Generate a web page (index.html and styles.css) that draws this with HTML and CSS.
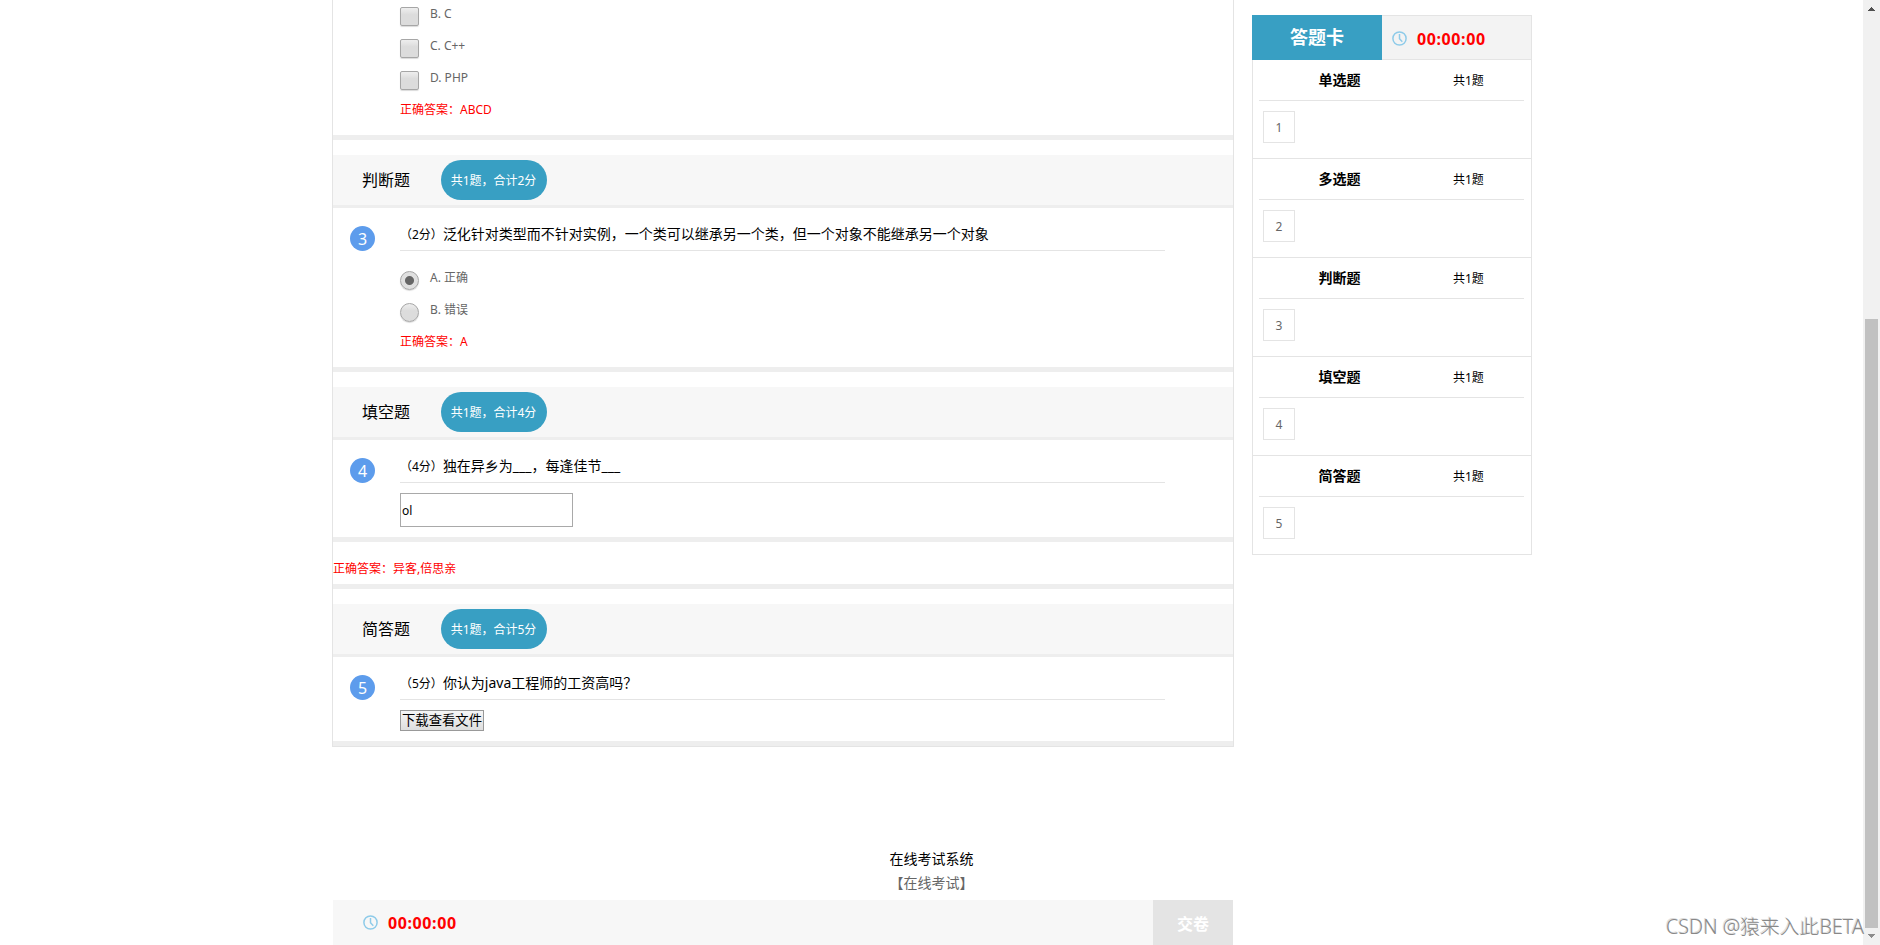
FILE: index.html
```html
<!DOCTYPE html>
<html lang="zh-CN">

<head>
    <meta charset="UTF-8">
    <title>在线考试</title>
    <link rel="stylesheet" href="styles.css">
</head>

<body>
    <div class="window">
        <div class="page">
            <div class="main">
                <div class="test">
                    <div class="question question-cut">
                        <ul class="options">
                            <li><input type="checkbox" id="q2b"><label for="q2b">B. C</label></li>
                            <li><input type="checkbox" id="q2c"><label for="q2c">C. C++</label></li>
                            <li><input type="checkbox" id="q2d"><label for="q2d">D. PHP</label></li>
                        </ul>
                        <p class="answer">正确答案：ABCD</p>
                    </div>

                    <div class="section-title">
                        <h2>判断题</h2>
                        <span class="pill">共1题，合计2分</span>
                    </div>
                    <div class="question">
                        <i class="num">3</i>
                        <p class="stem"><span>（2分）</span>泛化针对类型而不针对实例，一个类可以继承另一个类，但一个对象不能继承另一个对象</p>
                        <ul class="options">
                            <li><input type="radio" name="q3" id="q3a" checked><label for="q3a">A. 正确</label></li>
                            <li><input type="radio" name="q3" id="q3b"><label for="q3b">B. 错误</label></li>
                        </ul>
                        <p class="answer">正确答案：A</p>
                    </div>

                    <div class="section-title">
                        <h2>填空题</h2>
                        <span class="pill">共1题，合计4分</span>
                    </div>
                    <div class="question">
                        <i class="num">4</i>
                        <p class="stem"><span>（4分）</span>独在异乡为___，每逢佳节___</p>
                        <input type="text" class="blank" value="ol">
                    </div>
                    <div class="blank-answer">正确答案：异客,倍思亲</div>

                    <div class="section-title">
                        <h2>简答题</h2>
                        <span class="pill">共1题，合计5分</span>
                    </div>
                    <div class="question">
                        <i class="num">5</i>
                        <p class="stem"><span>（5分）</span>你认为java工程师的工资高吗？</p>
                        <button type="button" class="download">下载查看文件</button>
                    </div>
                </div>

                <div class="card">
                    <div class="card-head">
                        <h1>答题卡</h1>
                        <div class="card-time">
                            <svg class="clock" viewBox="0 0 15 15"><circle cx="7.5" cy="7.5" r="6.6"/><path d="M7.5 3v4.7l2.8 3"/></svg>
                            <b class="time">00:00:00</b>
                        </div>
                    </div>
                    <div class="card-row">
                        <div class="card-title"><b>单选题</b><span>共1题</span></div>
                        <a class="card-num">1</a>
                    </div>
                    <div class="card-row">
                        <div class="card-title"><b>多选题</b><span>共1题</span></div>
                        <a class="card-num">2</a>
                    </div>
                    <div class="card-row">
                        <div class="card-title"><b>判断题</b><span>共1题</span></div>
                        <a class="card-num">3</a>
                    </div>
                    <div class="card-row">
                        <div class="card-title"><b>填空题</b><span>共1题</span></div>
                        <a class="card-num">4</a>
                    </div>
                    <div class="card-row">
                        <div class="card-title"><b>简答题</b><span>共1题</span></div>
                        <a class="card-num">5</a>
                    </div>
                </div>
            </div>

            <div class="footer">
                <p>在线考试系统</p>
                <p class="sub">【在线考试】</p>
            </div>

            <div class="submit-bar">
                <svg class="clock" viewBox="0 0 15 15"><circle cx="7.5" cy="7.5" r="6.6"/><path d="M7.5 3v4.7l2.8 3"/></svg>
                <b class="time">00:00:00</b>
                <button type="button" class="submit">交卷</button>
            </div>
        </div>

        <div class="scrollbar">
            <svg class="arrow up" viewBox="0 0 7 4"><path d="M3 0h1v1h1v1h1v1h1v1H0V3h1V2h1V1h1z"/></svg>
            <div class="thumb"></div>
            <svg class="arrow down" viewBox="0 0 7 4"><path d="M0 0h7v1H6v1H5v1H4v1H3V3H2V2H1V1H0z"/></svg>
        </div>
    </div>
    <div class="watermark">CSDN @猿来入此BETA</div>
</body>

</html>
```
FILE: styles.css
```css
* {
    margin: 0;
    padding: 0;
    box-sizing: border-box;
}

body {
    font-family: "Noto Sans", "Noto Sans CJK SC", sans-serif;
    font-size: 12px;
    color: #000;
    background: #fff;
    overflow: hidden;
}

ul {
    list-style: none;
}

.window {
    display: flex;
    height: 945px;
}

.page {
    flex: 1;
    display: flex;
    flex-direction: column;
}

.main {
    display: flex;
    align-items: flex-start;
    gap: 18px;
    padding-left: 332px;
}

/* paper */
.test {
    width: 902px;
    height: 747px;
    border: 1px solid #e4e4e4;
    border-top: none;
}

.section-title {
    display: flex;
    align-items: center;
    gap: 31px;
    height: 53px;
    margin-top: 15px;
    padding-left: 29px;
    background: #f7f7f7;
    border-bottom: 3px solid #eee;
}

.section-title h2 {
    font-size: 16px;
    font-weight: normal;
    line-height: 24px;
    padding-bottom: 1px;
}

.pill {
    width: 106px;
    height: 40px;
    padding-right: 1px;
    line-height: 42px;
    border-radius: 20px;
    text-align: center;
    color: #fff;
    background: #389fc3;
}

.question {
    display: grid;
    grid-template-columns: 50px 765px;
    padding: 11px 0 10px 17px;
    border-bottom: 5px solid #eee;
}

.question > * {
    grid-column: 2;
}

.question-cut {
    padding: 0 0 10px 17px;
    height: 140px;
}

.question .num {
    grid-column: 1;
    grid-row: 1;
    width: 25px;
    height: 25px;
    margin-top: 7px;
    line-height: 26px;
    border-radius: 50%;
    font-size: 16px;
    font-style: normal;
    text-align: center;
    color: #fff;
    background: #5d9cec;
}

.stem {
    height: 32px;
    margin-bottom: 10px;
    line-height: 30px;
    font-size: 14px;
    border-bottom: 1px solid #e4e4e4;
    white-space: nowrap;
}

.stem span {
    font-size: 12px;
}

.options {
    padding-top: 3px;
}

.question-cut .options {
    padding-top: 0;
}

.options li {
    display: flex;
    gap: 11px;
    height: 32px;
    padding-top: 6px;
    line-height: 16px;
    color: #666;
}

.question-cut .options li {
    padding-top: 7px;
}

.question-cut .options label {
    margin-top: -1px;
}

.options input {
    appearance: none;
    width: 19px;
    height: 19px;
    border: 1px solid #a6a6a6;
    border-radius: 2px;
    background: linear-gradient(#eee, #dcdcdc 40%);
    box-shadow: 0 1px 1px rgba(0, 0, 0, 0.15);
}

.options input[type="radio"] {
    margin-top: 1px;
    border-radius: 50%;
}

.options input[type="radio"]:checked {
    background: radial-gradient(circle, #666 4px, #e0e0e0 5px);
}

.answer {
    height: 29px;
    line-height: 28px;
    color: #f00;
}

.blank {
    width: 173px;
    height: 34px;
    padding: 1px;
    border: 1px solid #a9a9a9;
    font-family: inherit;
    font-size: 12px;
}

.blank-answer {
    height: 47px;
    padding-top: 15px;
    line-height: 24px;
    color: #f00;
    border-bottom: 5px solid #eee;
}

.download {
    width: 84px;
    height: 21px;
    border: 1px solid #999;
    background: linear-gradient(#f6f6f6, #dedede);
    font-family: inherit;
    font-size: 13.33px;
    line-height: 19px;
    white-space: nowrap;
}

/* answer card */
.card {
    width: 280px;
    margin-top: 15px;
    border: 1px solid #e4e4e4;
    border-top: none;
}

.card-head {
    display: flex;
    height: 45px;
    margin: 0 -1px;
}

.card-head h1 {
    width: 130px;
    line-height: 45px;
    font-size: 18px;
    text-align: center;
    color: #fff;
    background: #389fc3;
}

.card-time {
    flex: 1;
    display: flex;
    align-items: center;
    gap: 10px;
    padding: 2px 0 0 10px;
    background: #f3f3f3;
    border: 1px solid #e4e4e4;
    border-left: none;
}

.clock {
    width: 15px;
    height: 15px;
    fill: none;
    stroke: #8ecbe9;
    stroke-width: 1.5;
}

.time {
    font-size: 16px;
    letter-spacing: 0.6px;
    color: #f00;
}

.card-row {
    height: 99px;
    padding: 0 7px 0 6px;
    border-bottom: 1px solid #e4e4e4;
}

.card-row:last-child {
    border-bottom: none;
    height: 98px;
}

.card-title {
    display: flex;
    height: 41px;
    line-height: 40px;
    border-bottom: 1px solid #e4e4e4;
}

.card-title b {
    width: 161px;
    font-size: 14px;
    text-align: center;
}

.card-title span {
    margin-left: 33px;
    line-height: 42px;
}

.card-num {
    display: block;
    width: 32px;
    height: 32px;
    margin: 10px 0 0 4px;
    border: 1px solid #e4e4e4;
    line-height: 31px;
    text-align: center;
    color: #666;
}

.footer {
    margin-top: 100px;
    font-size: 14px;
    line-height: 24px;
    text-align: center;
}

.footer .sub {
    color: #666;
}

.submit-bar {
    display: flex;
    align-items: center;
    gap: 10px;
    width: 900px;
    height: 45px;
    margin: auto 0 0 333px;
    padding-left: 30px;
    background: #f7f7f7;
}

.submit {
    width: 80px;
    height: 45px;
    margin-left: auto;
    border: none;
    font-family: inherit;
    font-size: 16px;
    font-weight: bold;
    color: #fff;
    background: #e4e4e4;
}

/* scrollbar */
.scrollbar {
    display: flex;
    flex-direction: column;
    align-items: center;
    width: 17px;
    padding: 7px 0;
    background: #f1f1f1;
}

.thumb {
    width: 13px;
    height: 609px;
    margin-top: auto;
    background: #c1c1c1;
}

.arrow {
    width: 7px;
    height: 4px;
    fill: #505050;
    shape-rendering: crispEdges;
}

.arrow.down {
    margin-top: 6px;
    fill: #8c8c8c;
}

.watermark {
    position: absolute;
    right: 16px;
    bottom: 4px;
    font-size: 19.8px;
    line-height: 28px;
    font-weight: 300;
    color: #888;
    text-shadow: -1px -1px 0 #ddd;
    white-space: nowrap;
}
```
